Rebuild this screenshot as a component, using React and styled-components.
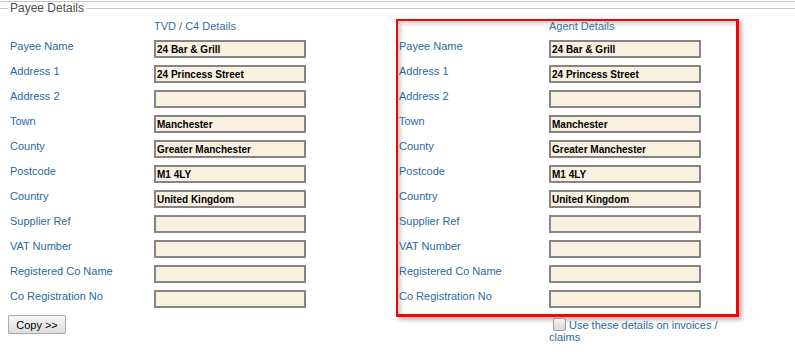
import styled, { createGlobalStyle } from "styled-components";

const GlobalStyle = createGlobalStyle`
  body {
    margin: 0;
    background: #ffffff;
    font-family: "Liberation Sans", Arial, sans-serif;
  }
`;

const Page = styled.div`
  width: 795px;
  padding-top: 1px;
`;

const TopRule = styled.div`
  border-top: 1px solid #c8c8c8;
`;

const Legend = styled.div`
  display: flex;
  align-items: center;
  height: 13px;
  font-size: 12px;
  line-height: 13px;
  color: #4f4f4f;

  &::before,
  &::after {
    content: "";
    height: 1px;
    background: #c8c8c8;
  }
  &::before {
    width: 8px;
  }
  &::after {
    flex: 1;
  }

  & span {
    padding: 0 2px;
  }
`;

const Columns = styled.div`
  display: flex;
  align-items: flex-start;
  margin-top: 4px;
`;

const LeftColumn = styled.div`
  width: 386px;
  padding: 2px 0 0 10px;
`;

const RightColumn = styled.div`
  width: 343px;
`;

const Highlight = styled.div`
  border: 2px solid #ff0000;
  border-right-width: 3px;
  border-bottom-width: 3px;
  padding: 0 0 6px 1px;
  box-shadow: 3px 3px 4px rgba(0, 0, 0, 0.28),
    inset 3px 3px 4px rgba(0, 0, 0, 0.18);
`;

const ColumnHeader = styled.div`
  margin-left: ${(p) => p.$offset}px;
  height: 11px;
  font-size: 11px;
  line-height: 11px;
  color: #3d6e96;
  margin-bottom: 8px;
`;

const Row = styled.div`
  display: flex;
  align-items: flex-start;
  height: 18px;
  margin-bottom: 7px;

  &:last-child {
    margin-bottom: 0;
  }
`;

const Label = styled.label`
  width: ${(p) => p.$width}px;
  flex-shrink: 0;
  font-size: 11px;
  line-height: 13px;
  color: #2b6a9f;
`;

const Field = styled.input`
  box-sizing: border-box;
  width: 152px;
  height: 18px;
  margin: 0;
  padding: 0 0 0 1px;
  border: 2px solid #858585;
  background: #f8f1df;
  font-family: "Liberation Sans", Arial, sans-serif;
  font-size: 10px;
  font-weight: bold;
  color: #000000;
  outline: none;
`;

const CopyButton = styled.button`
  display: block;
  margin: 7px 0 0 -2px;
  height: 19px;
  width: 58px;
  padding: 0;
  border: 1px solid #a9a9a9;
  border-radius: 1px;
  background: linear-gradient(#f7f7f7, #dedede);
  font-family: "Liberation Sans", Arial, sans-serif;
  font-size: 11px;
  color: #000000;
`;

const CheckLabel = styled.label`
  display: block;
  margin-left: 153px;
  width: 185px;
  font-size: 11px;
  line-height: 12px;
  color: #2b6a9f;
`;

const Check = styled.input`
  appearance: none;
  display: inline-block;
  vertical-align: -2px;
  width: 13px;
  height: 13px;
  margin: 1px 3px 0 4px;
  border: 1px solid #9a9a9a;
  border-radius: 2px;
  background: linear-gradient(#f2f2f2, #dcdcdc);
`;

const fields = [
  ["Payee Name", "24 Bar & Grill"],
  ["Address 1", "24 Princess Street"],
  ["Address 2", ""],
  ["Town", "Manchester"],
  ["County", "Greater Manchester"],
  ["Postcode", "M1 4LY"],
  ["Country", "United Kingdom"],
  ["Supplier Ref", ""],
  ["VAT Number", ""],
  ["Registered Co Name", ""],
  ["Co Registration No", ""],
];

function FieldRows({ labelWidth }) {
  return fields.map(([label, value]) => (
    <Row key={label}>
      <Label $width={labelWidth}>{label}</Label>
      <Field type="text" readOnly value={value} />
    </Row>
  ));
}

export default function App() {
  return (
    <>
      <GlobalStyle />
      <Page>
        <TopRule />
        <Legend>
          <span>Payee Details</span>
        </Legend>
        <Columns>
          <LeftColumn>
            <ColumnHeader $offset={144}>TVD / C4 Details</ColumnHeader>
            <FieldRows labelWidth={144} />
            <CopyButton type="button">Copy &gt;&gt;</CopyButton>
          </LeftColumn>
          <RightColumn>
            <Highlight>
              <ColumnHeader $offset={150}>Agent Details</ColumnHeader>
              <FieldRows labelWidth={150} />
            </Highlight>
            <CheckLabel>
              <Check type="checkbox" />
              Use these details on invoices / claims
            </CheckLabel>
          </RightColumn>
        </Columns>
      </Page>
    </>
  );
}
